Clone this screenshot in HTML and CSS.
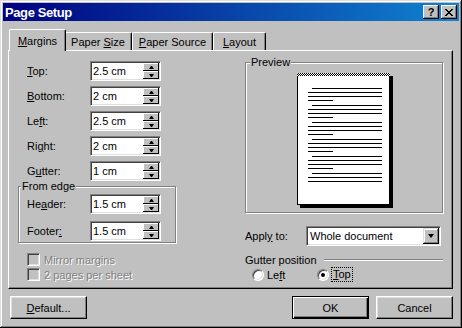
FILE: index.html
```html
<!DOCTYPE html>
<html lang="en">
<head>
    <meta charset="UTF-8">
    <title>Page Setup</title>
    <link rel="stylesheet" href="styles.css">
</head>
<body>
    <div class="window">
        <div class="titlebar">
            <span class="title">Page Setup</span>
            <div class="title-buttons">
                <span class="tbtn help">?</span>
                <span class="tbtn">
                    <svg width="8" height="7" viewBox="0 0 8 7" shape-rendering="crispEdges">
                        <path d="M0 0h2v1h-2zM6 0h2v1h-2zM1 1h2v1h-2zM5 1h2v1h-2zM2 2h4v1h-4zM3 3h2v1h-2zM2 4h4v1h-4zM1 5h2v1h-2zM5 5h2v1h-2zM0 6h2v1h-2zM6 6h2v1h-2z" fill="#000"/>
                    </svg>
                </span>
            </div>
        </div>

        <div class="dialog">
            <div class="tabs">
                <div class="tab active"><u>M</u>argins</div>
                <div class="tab tab-size">Paper <u>S</u>ize</div>
                <div class="tab tab-source"><u>P</u>aper Source</div>
                <div class="tab tab-layout"><u>L</u>ayout</div>
            </div>

            <div class="panel">
                <div class="col-left">
                    <div class="field">
                        <label><u>T</u>op:</label>
                        <div class="spin"><span class="spin-val">2.5 cm</span><span class="spin-btns"><span class="sb up"></span><span class="sb down"></span></span></div>
                    </div>
                    <div class="field">
                        <label><u>B</u>ottom:</label>
                        <div class="spin"><span class="spin-val">2 cm</span><span class="spin-btns"><span class="sb up"></span><span class="sb down"></span></span></div>
                    </div>
                    <div class="field">
                        <label>Le<u>f</u>t:</label>
                        <div class="spin"><span class="spin-val">2.5 cm</span><span class="spin-btns"><span class="sb up"></span><span class="sb down"></span></span></div>
                    </div>
                    <div class="field">
                        <label>Ri<u>g</u>ht:</label>
                        <div class="spin"><span class="spin-val">2 cm</span><span class="spin-btns"><span class="sb up"></span><span class="sb down"></span></span></div>
                    </div>
                    <div class="field">
                        <label>G<u>u</u>tter:</label>
                        <div class="spin"><span class="spin-val">1 cm</span><span class="spin-btns"><span class="sb up"></span><span class="sb down"></span></span></div>
                    </div>

                    <div class="group edge">
                        <div class="group-title">From edge</div>
                        <div class="field">
                            <label>He<u>a</u>der:</label>
                            <div class="spin"><span class="spin-val">1.5 cm</span><span class="spin-btns"><span class="sb up"></span><span class="sb down"></span></span></div>
                        </div>
                        <div class="field">
                            <label>Footer<u>:</u></label>
                            <div class="spin"><span class="spin-val">1.5 cm</span><span class="spin-btns"><span class="sb up"></span><span class="sb down"></span></span></div>
                        </div>
                    </div>

                    <div class="checks">
                        <div class="check disabled"><span class="cb"></span><span>Mirror margins</span></div>
                        <div class="check disabled"><span class="cb"></span><span>2 pages per sheet</span></div>
                    </div>
                </div>

                <div class="col-right">
                    <div class="group preview">
                        <div class="group-title">Preview</div>
                        <div class="page">
                            <div class="page-top"></div>
                            <div class="para"><div class="ln first"></div><div class="ln"></div><div class="ln"></div><div class="ln short"></div></div>
                            <div class="para"><div class="ln first"></div><div class="ln"></div><div class="ln"></div><div class="ln short"></div></div>
                            <div class="para"><div class="ln first"></div><div class="ln"></div><div class="ln"></div><div class="ln short"></div></div>
                            <div class="para"><div class="ln first"></div><div class="ln"></div><div class="ln"></div><div class="ln short"></div></div>
                            <div class="para"><div class="ln first"></div><div class="ln"></div><div class="ln"></div><div class="ln short"></div></div>
                            <div class="para"><div class="ln first"></div><div class="ln"></div><div class="ln"></div></div>
                        </div>
                    </div>

                    <div class="apply">
                        <label>Appl<u>y</u> to:</label>
                        <div class="select">
                            <span class="select-val">Whole document</span>
                            <span class="select-btn"><span class="arrow-down"></span></span>
                        </div>
                    </div>

                    <div class="gutter-head">
                        <span>Gutter position</span>
                        <span class="etched-line"></span>
                    </div>
                    <div class="radios">
                        <div class="radio"><span class="rb"></span><span>Le<u>f</u>t</span></div>
                        <div class="radio"><span class="rb checked"></span><span class="focus"><u>T</u>op</span></div>
                    </div>
                </div>
            </div>

            <div class="buttons">
                <button class="btn btn-left"><u>D</u>efault...</button>
                <button class="btn btn-default">OK</button>
                <button class="btn">Cancel</button>
            </div>
        </div>
    </div>
</body>
</html>
```

FILE: styles.css
```css
:root {
    --face: #c0c0c0;
    --light: #dfdfdf;
    --shadow: #808080;
    --dark: #000;
    --text: #000;
}

* {
    box-sizing: border-box;
}

body {
    margin: 0;
    font-family: "Liberation Sans", Arial, sans-serif;
    font-size: 11px;
    color: var(--text);
    background: var(--face);
}

u {
    text-decoration: underline;
    text-underline-offset: 1px;
}

.window {
    width: 462px;
    height: 328px;
    padding: 3px;
    background: var(--face);
    box-shadow: inset -1px -1px var(--dark), inset 1px 1px var(--light),
                inset -2px -2px var(--shadow), inset 2px 2px #fff;
}

/* title bar */
.titlebar {
    height: 18px;
    display: flex;
    align-items: center;
    justify-content: space-between;
    padding: 0 2px;
    background: linear-gradient(90deg, #000080, #1084d0);
    color: #fff;
}

.title {
    font-weight: bold;
    font-size: 13px;
    letter-spacing: -0.4px;
}

.title-buttons {
    display: flex;
    gap: 2px;
}

.tbtn {
    width: 16px;
    height: 14px;
    display: flex;
    align-items: center;
    justify-content: center;
    background: var(--face);
    color: #000;
    box-shadow: inset -1px -1px var(--dark), inset 1px 1px #fff, inset -2px -2px var(--shadow);
}

.tbtn.help {
    font-weight: bold;
    font-size: 11px;
    line-height: 14px;
}

/* dialog body */
.dialog {
    padding: 8px 6px 6px 5px;
}

.tabs {
    display: flex;
    align-items: flex-end;
    height: 21px;
    padding-left: 3px;
    position: relative;
    z-index: 1;
}

.tab {
    height: 18px;
    width: 53px;
    padding-top: 3px;
    line-height: 13px;
    text-align: center;
    white-space: nowrap;
    border-top: 1px solid #fff;
    border-left: 1px solid #fff;
    border-right: 1px solid var(--dark);
    border-radius: 2px 2px 0 0;
    box-shadow: inset -1px 0 var(--shadow);
    background: var(--face);
}

.tab-size { width: 68px; }
.tab-source { width: 81px; }
.tab-layout { width: 53px; }

.tab.active {
    height: 22px;
    width: 57px;
    margin: 0 -2px -1px -2px;
    padding-top: 5px;
    position: relative;
    z-index: 2;
}

.panel {
    height: 239px;
    display: flex;
    padding: 10px 0 0 9px;
    border-top: 1px solid #fff;
    border-left: 1px solid #fff;
    border-right: 1px solid var(--dark);
    border-bottom: 1px solid var(--dark);
    box-shadow: inset -1px -1px var(--shadow);
}

.col-left {
    width: 227px;
}

.col-right {
    width: 198px;
}

/* labelled spin fields */
.field {
    display: flex;
    align-items: center;
    height: 20px;
    margin: 0 0 5px 9px;
}

.field label {
    width: 63px;
}

.spin,
.select {
    display: flex;
    height: 20px;
    padding: 1px;
    background: #fff;
    border: 1px solid;
    border-color: var(--shadow) #fff #fff var(--shadow);
    box-shadow: inset 1px 1px #404040, inset -1px -1px var(--light);
}

.spin {
    width: 71px;
}

.spin-val {
    flex: 1;
    line-height: 16px;
    padding-left: 1px;
}

.spin-btns {
    width: 16px;
    display: flex;
    flex-direction: column;
}

.sb {
    height: 8px;
    display: flex;
    align-items: center;
    justify-content: center;
    background: var(--face);
    box-shadow: inset -1px -1px var(--dark), inset 1px 1px #fff;
}

.sb::after {
    content: "";
    width: 1px;
    height: 0;
    border-left: 2px solid transparent;
    border-right: 2px solid transparent;
}

.sb.up::after {
    border-bottom: 3px solid #000;
}

.sb.down::after {
    border-top: 3px solid #000;
}

/* group boxes */
.group {
    border: 1px solid var(--shadow);
    box-shadow: inset 1px 1px #fff, 1px 1px #fff;
}

.group-title {
    width: fit-content;
    margin: -7px 0 0 2px;
    padding: 0 1px;
    line-height: 13px;
    background: var(--face);
}

.edge {
    width: 158px;
    height: 57px;
    margin-top: 5px;
}

.edge .field {
    margin: 1px 0 7px 8px;
}

.edge .field + .field {
    margin-top: 0;
}

/* checkboxes */
.checks {
    margin: 9px 0 0 9px;
}

.check {
    display: flex;
    align-items: center;
    height: 15px;
    gap: 4px;
}

.check.disabled {
    color: var(--shadow);
    text-shadow: 1px 1px #fff;
}

.cb {
    width: 13px;
    height: 13px;
    border: 1px solid;
    border-color: var(--shadow) #fff #fff var(--shadow);
    box-shadow: inset 1px 1px #404040, inset -1px -1px var(--light);
    background: var(--face);
}

/* preview */
.preview {
    height: 151px;
    margin-top: 1px;
}

.preview .group-title {
    margin-left: 4px;
}

.page {
    width: 93px;
    height: 132px;
    margin: 4px 0 0 51px;
    background: #fff;
    border: 1px solid #000;
    border-top: 0;
    box-shadow: 3px 3px 0 #000;
    padding-top: 12px;
}

.page-top {
    height: 3px;
    margin: -12px -1px 12px;
    background: repeating-conic-gradient(#000 0 25%, #fff 0 50%) 0 0 / 2px 2px;
}

.para {
    margin-bottom: 4px;
}

.ln {
    height: 1px;
    width: 74px;
    margin: 0 0 3px 10px;
    background: #000;
}

.ln.first {
    width: 70px;
    margin-left: 14px;
}

.ln.short {
    width: 25px;
}

/* apply to */
.apply {
    display: flex;
    align-items: center;
    margin-top: 13px;
}

.apply label {
    width: 61px;
}

.select {
    width: 135px;
}

.select-val {
    flex: 1;
    line-height: 16px;
    padding-left: 2px;
}

.select-btn {
    width: 16px;
    display: flex;
    align-items: center;
    justify-content: center;
    background: var(--face);
    box-shadow: inset -1px -1px var(--dark), inset 1px 1px var(--light),
                inset -2px -2px var(--shadow), inset 2px 2px #fff;
}

.arrow-down {
    width: 1px;
    height: 0;
    border-left: 3px solid transparent;
    border-right: 3px solid transparent;
    border-top: 4px solid #000;
}

/* gutter position */
.gutter-head {
    display: flex;
    align-items: center;
    height: 13px;
    margin-top: 7px;
}

.etched-line {
    flex: 1;
    margin-left: 7px;
    height: 2px;
    border-top: 1px solid var(--shadow);
    border-bottom: 1px solid #fff;
}

.radios {
    display: flex;
    margin: 1px 0 0 7px;
}

.radio {
    display: flex;
    align-items: center;
    height: 15px;
    gap: 3px;
}

.radio:first-child {
    width: 65px;
}

.rb {
    width: 12px;
    height: 12px;
    border-radius: 50%;
    border: 1px solid;
    border-color: var(--shadow) #fff #fff var(--shadow);
    box-shadow: inset 1px 1px #404040, inset -1px -1px var(--light);
    background: #fff;
    display: flex;
    align-items: center;
    justify-content: center;
}

.rb.checked::after {
    content: "";
    width: 4px;
    height: 4px;
    border-radius: 50%;
    background: #000;
}

.focus {
    outline: 1px dotted #000;
    padding: 0 1px;
    line-height: 13px;
}

/* bottom buttons */
.buttons {
    display: flex;
    gap: 7px;
    margin-top: 7px;
}

.btn {
    width: 77px;
    height: 23px;
    padding: 0;
    font-family: inherit;
    font-size: 11px;
    color: #000;
    background: var(--face);
    border: 1px solid;
    border-color: #fff var(--dark) var(--dark) #fff;
    box-shadow: inset -1px -1px var(--shadow), inset 1px 1px var(--light);
}

.btn-left {
    margin-left: 2px;
    margin-right: auto;
}

.btn-default {
    border: 1px solid var(--dark);
    box-shadow: inset 1px 1px #fff, inset -1px -1px var(--dark), inset -2px -2px var(--shadow);
}
```
